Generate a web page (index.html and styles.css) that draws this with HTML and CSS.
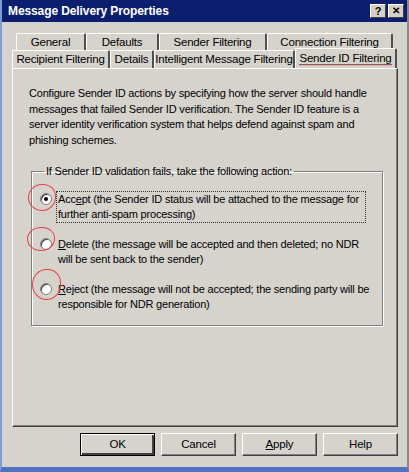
FILE: index.html
```html
<!DOCTYPE html>
<html>
<head>
<meta charset="utf-8">
<link rel="stylesheet" href="styles.css">
</head>
<body>
<div class="window">
  <div class="titlebar">
    <span class="title">Message Delivery Properties</span>
    <div class="tb-btns">
      <span class="tb-btn">?</span>
      <span class="tb-btn tb-close">✕</span>
    </div>
  </div>
  <div class="client">
    <div class="tabs">
      <div class="tabrow back">
        <span class="tab t-general">General</span>
        <span class="tab t-defaults">Defaults</span>
        <span class="tab t-sender">Sender Filtering</span>
        <span class="tab t-conn">Connection Filtering</span>
      </div>
      <div class="tabrow front">
        <span class="tab t-recip">Recipient Filtering</span>
        <span class="tab t-details">Details</span>
        <span class="tab t-imf">Intelligent Message Filtering</span>
        <span class="tab t-sid selected"><span class="underlined">Sender ID Filtering</span></span>
      </div>
    </div>
    <div class="panel">
      <p class="desc">Configure Sender ID actions by specifying how the server should handle messages that failed Sender ID verification. The Sender ID feature is a server identity verification system that helps defend against spam and phishing schemes.</p>
      <fieldset class="group">
        <legend class="group-label">If Sender ID validation fails, take the following action:</legend>
        <div class="option">
          <span class="radio checked"></span>
          <span class="opt-text focused">Acc<u>e</u>pt (the Sender ID status will be attached to the message for further anti-spam processing)</span>
          <span class="mark mark1"></span>
        </div>
        <div class="option">
          <span class="radio"></span>
          <span class="opt-text"><u>D</u>elete (the message will be accepted and then deleted; no NDR will be sent back to the sender)</span>
          <span class="mark mark2"></span>
        </div>
        <div class="option">
          <span class="radio"></span>
          <span class="opt-text"><u>R</u>eject (the message will not be accepted; the sending party will be responsible for NDR generation)</span>
          <span class="mark mark3"></span>
        </div>
      </fieldset>
    </div>
    <div class="buttons">
      <span class="btn default">OK</span>
      <span class="btn">Cancel</span>
      <span class="btn"><u>A</u>pply</span>
      <span class="btn">Help</span>
    </div>
  </div>
</div>
</body>
</html>
```

FILE: styles.css
```css
html, body {
  margin: 0;
  padding: 0;
  background: #d4d0c8;
}
body {
  width: 409px;
  height: 472px;
  overflow: hidden;
  font-family: "Liberation Sans", Arial, sans-serif;
  font-size: 11px;
  letter-spacing: -0.2px;
  color: #000;
}
.window {
  width: 409px;
  height: 472px;
  box-sizing: border-box;
  border-left: 2px solid #7d9bd8;
  border-right: 2px solid #8a8a8a;
  border-bottom: 5px solid #4f72c2;
  background: #d6d3cd;
  display: flex;
  flex-direction: column;
}
.titlebar {
  height: 22px;
  background: #0c1f6e;
  display: flex;
  align-items: center;
  justify-content: space-between;
  padding: 0 3px 0 6px;
  flex-shrink: 0;
}
.title {
  color: #fff;
  font-weight: bold;
  font-size: 12px;
  letter-spacing: -0.1px;
}
.tb-btns {
  display: flex;
  gap: 2px;
}
.tb-btn {
  width: 16px;
  height: 14px;
  box-sizing: border-box;
  background: #d4d0c8;
  border-top: 1px solid #fff;
  border-left: 1px solid #fff;
  border-right: 1px solid #404040;
  border-bottom: 1px solid #404040;
  font-weight: bold;
  font-size: 11px;
  line-height: 12px;
  text-align: center;
  letter-spacing: 0;
}
.tb-close { font-size: 10px; }
.client {
  flex: 1;
  display: flex;
  flex-direction: column;
  padding: 11px 9px 0 10px;
}
.tabs {
  display: flex;
  flex-direction: column;
}
.tabrow {
  display: flex;
}
.tabrow.back {
  padding-left: 4px;
  height: 17px;
}
.tabrow.front {
  height: 18px;
}
.tab {
  box-sizing: border-box;
  text-align: center;
  border-top: 1px solid #fff;
  border-left: 1px solid #fff;
  border-right: 2px solid #505050;
  border-top-left-radius: 2px;
  border-top-right-radius: 2px;
  line-height: 17px;
  white-space: nowrap;
  font-size: 11.5px;
}
.t-general { width: 70px; }
.t-defaults { width: 73px; }
.t-sender { width: 108px; }
.t-conn { width: 126px; }
.t-recip { width: 98px; }
.t-details { width: 44px; }
.t-imf { width: 141px; }
.t-sid { width: 102px; }
.tab.selected {
  margin-top: -2px;
  height: 20px;
  line-height: 19px;
  position: relative;
  z-index: 1;
  background: #d6d3cd;
}
.underlined {
  border-bottom: 1px solid #e8323c;
  box-shadow: 0 1px 0 #7fd8d8;
}
.panel {
  height: 359px;
  box-sizing: border-box;
  border-top: 1px solid #fff;
  border-left: 1px solid #fff;
  border-right: 1px solid #404040;
  border-bottom: 1px solid #404040;
  box-shadow: inset -1px -1px 0 #808080;
  padding: 17px 10px 0 16px;
}
.desc {
  margin: 0;
  line-height: 15.5px;
  width: 350px;
}
.group {
  margin: 16px 0 0 2px;
  width: 352px;
  height: 162px;
  box-sizing: border-box;
  border: 1px solid #808080;
  box-shadow: inset 1px 1px 0 #fff, 1px 1px 0 #fff;
  padding: 13px 8px 0 8px;
}
.group-label {
  padding: 0 2px;
  margin-left: 4px;
  line-height: 14px;
}
.option {
  position: relative;
  display: flex;
  align-items: flex-start;
  margin-bottom: 13px;
}
.radio {
  width: 12px;
  height: 12px;
  box-sizing: border-box;
  border-radius: 50%;
  background: #fff;
  border: 1px solid #808080;
  box-shadow: inset 1px 1px 0 #404040;
  margin-top: 2px;
  margin-right: 4px;
  flex-shrink: 0;
  display: flex;
  align-items: center;
  justify-content: center;
}
.radio.checked::after {
  content: "";
  width: 4px;
  height: 4px;
  border-radius: 50%;
  background: #000;
}
.opt-text {
  line-height: 15px;
  width: 314px;
  padding: 0 1px;
  border: 1px solid transparent;
}
.opt-text.focused {
  width: 306px;
  border: 1px dotted #333;
}
.mark {
  position: absolute;
  border: 1.5px solid #e8404a;
  border-radius: 50%;
  border-top-right-radius: 45%;
}
.mark1 { left: -12px; top: -7px; width: 26px; height: 25px; }
.mark2 { left: -13px; top: -9px; width: 26px; height: 22px; }
.mark3 { left: -8px; top: -12px; width: 27px; height: 29px; }
.buttons {
  display: flex;
  justify-content: flex-end;
  gap: 6px;
  padding-top: 6px;
}
.btn {
  width: 75px;
  height: 23px;
  box-sizing: border-box;
  border-top: 1px solid #fff;
  border-left: 1px solid #fff;
  border-right: 1px solid #404040;
  border-bottom: 1px solid #404040;
  box-shadow: inset -1px -1px 0 #808080;
  text-align: center;
  line-height: 21px;
  font-size: 11.5px;
}
.btn.default {
  border: 1px solid #000;
  box-shadow: inset 1px 1px 0 #fff, inset -2px -2px 0 #404040;
}
```
